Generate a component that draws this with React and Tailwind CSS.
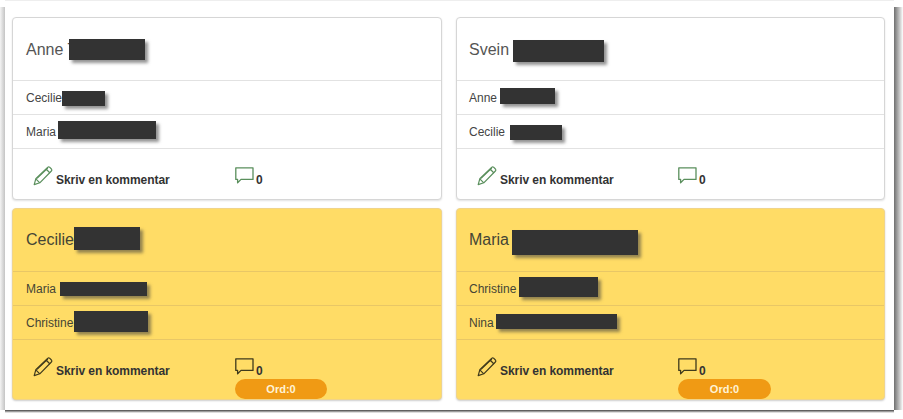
import React from "react";

const Black = ({ w, h, ml = 0, mt = 0 }) => (
  <span
    className="block shrink-0 bg-[#333333] shadow-[3px_3px_3px_rgba(60,60,60,0.55)]"
    style={{ width: w, height: h, marginLeft: ml, marginTop: mt }}
  />
);

const Pencil = ({ color }) => (
  <svg width="20" height="20" viewBox="0 0 20 20" fill="none" stroke={color} strokeWidth="1.2" strokeLinejoin="round" className="shrink-0 self-start">
    <path d="M1.2 18.6 L2.8 12.8 L14.6 1.4 Q15.6 .6 16.6 1.2 L18.4 3 Q19.2 4 18.4 5 L6.8 16.8 Z" />
    <path d="M2.8 12.8 L6.8 16.8 M13 3 L17 7 M4 12.4 L14.8 2" />
  </svg>
);

const Bubble = ({ color }) => (
  <svg width="19" height="17" viewBox="0 0 19 17" fill="none" stroke={color} strokeWidth="1.3" strokeLinejoin="round" className="mt-[1px] shrink-0 self-start">
    <path d="M.8 .8 H18 V12.4 H6 L2.6 15.8 V12.4 H.8 Z" />
  </svg>
);

const Row = ({ name, w, h, ml, mt, yellow, right }) => (
  <div
    className={`flex h-[34px] items-center border-t text-[12px] ${right ? "pl-[12px]" : "pl-[13px]"} ${
      yellow ? "border-[#e8c766] text-[#454535]" : "border-[#e2e2e2] pt-[1px] text-[#444444]"
    }`}
  >
    <span>{name}</span>
    <Black w={w} h={h} ml={ml} mt={mt} />
  </div>
);

const Card = ({ title, tw, th, tml, tmt, rows, yellow, right }) => {
  const icon = yellow ? "#3f3a1c" : "#5a8f5c";
  return (
    <div
      className={`relative rounded-[4px] border ${
        yellow
          ? "h-[192px] border-[#f0d48a] bg-[#ffdc66] shadow-[0_1px_2px_rgba(0,0,0,0.2)]"
          : "h-[183px] border-[#d6d6d6] bg-white shadow-[0_1px_2px_rgba(0,0,0,0.12)]"
      }`}
    >
      <div
        className={`flex h-[62px] items-center text-[16px] ${right ? "pl-[12px]" : "pl-[13px]"} ${
          yellow ? "text-[#454535]" : "pt-[1px] text-[#555555]"
        }`}
      >
        <span>{title}</span>
        <Black w={tw} h={th} ml={tml} mt={tmt} />
      </div>
      {rows.map((r) => (
        <Row key={r.name} {...r} yellow={yellow} right={right} />
      ))}
      <div
        className={`flex h-[51px] items-start border-t pl-[20px] pt-[17px] text-[12px] font-bold text-[#333333] ${
          yellow ? "border-[#e8c766]" : "border-[#e2e2e2]"
        }`}
      >
        <div className={`flex h-[22px] items-end ${right ? "w-[201px]" : "w-[202px]"}`}>
          <Pencil color={icon} />
          <span className="ml-[3px] leading-[15px] tracking-[-0.06px]">Skriv en kommentar</span>
        </div>
        <div className="flex h-[22px] items-end">
          <Bubble color={icon} />
          <span className="ml-[2px] leading-[15px]">0</span>
        </div>
      </div>
      {yellow && (
        <div
          className={`absolute bottom-0 flex h-[20px] items-center justify-center rounded-full bg-[#f09a14] text-[11px] font-bold text-[#fff3d6] ${
            right ? "left-[221px] w-[93px]" : "left-[222px] w-[92px]"
          }`}
        >
          Ord:0
        </div>
      )}
    </div>
  );
};

const cards = [
  {
    title: "Anne T",
    tw: 76, th: 21, tml: -8, tmt: 0,
    rows: [
      { name: "Cecilie", w: 43, h: 15, ml: 0, mt: 0 },
      { name: "Maria", w: 98, h: 18, ml: 2, mt: -4 },
    ],
  },
  {
    title: "Svein",
    right: true,
    tw: 91, th: 22, tml: 4, tmt: 2,
    rows: [
      { name: "Anne", w: 55, h: 16, ml: 3, mt: -4 },
      { name: "Cecilie", w: 52, h: 15, ml: 5, mt: 0 },
    ],
  },
  {
    title: "Cecilie",
    yellow: true,
    tw: 66, th: 23, tml: 0, tmt: -3,
    rows: [
      { name: "Maria", w: 87, h: 14, ml: 4, mt: 0 },
      { name: "Christine", w: 74, h: 21, ml: 1, mt: -2 },
    ],
  },
  {
    title: "Maria",
    yellow: true,
    right: true,
    tw: 126, th: 25, tml: 3, tmt: 5,
    rows: [
      { name: "Christine", w: 79, h: 20, ml: 3, mt: -3 },
      { name: "Nina", w: 121, h: 15, ml: 2, mt: -2 },
    ],
  },
];

export default function App() {
  return (
    <div className="h-[419px] w-[903px] overflow-hidden bg-white font-['Liberation_Sans',Arial,sans-serif]">
      <div className="flex h-[410px]">
        <div className="mt-[7px] w-[5px] bg-gradient-to-r from-[#f4f4f4] to-[#c4c4c4]" />
        <div className="w-[889px] border-t border-[#eeeeee] pl-[7px] pt-[16px]">
          <div className="grid grid-cols-[430px_429px] gap-x-[14px] gap-y-[8px]">
            {cards.map((c) => (
              <Card key={c.title} {...c} />
            ))}
          </div>
        </div>
        <div className="mt-[7px] w-[9px] bg-gradient-to-r from-[#707070] to-white" />
      </div>
      <div className="ml-[5px] h-[3px] w-[889px] bg-gradient-to-b from-[#444444] to-white" />
    </div>
  );
}
